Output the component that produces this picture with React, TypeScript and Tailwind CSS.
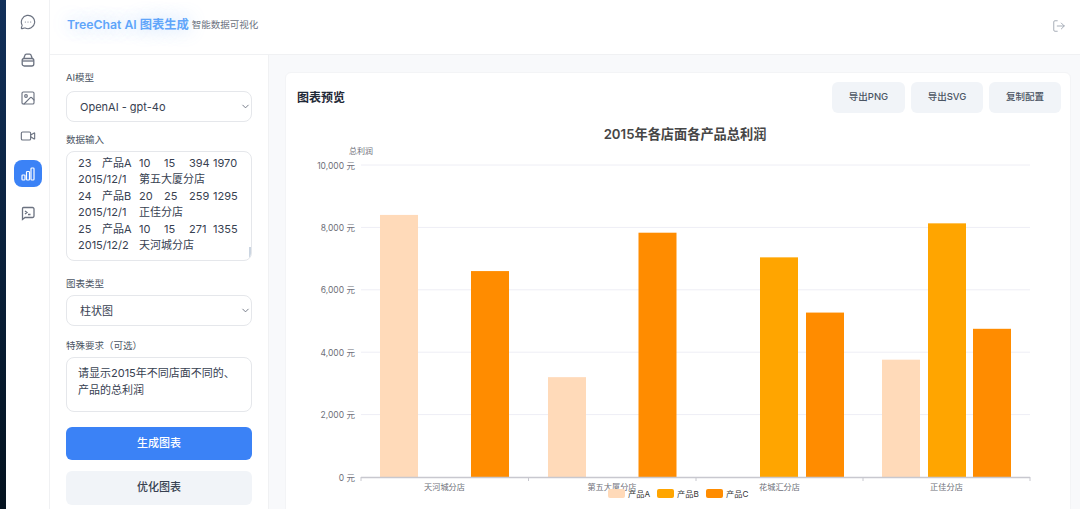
import { ChevronDown, Image, LogOut, MessageCircleMore, Video } from "lucide-react";

const font = { cjk: "font-['Inter','Noto_Sans_CJK_SC',sans-serif]" };

const rows = [
  ["23", "产品A", "10", "15", "394", "1970"],
  ["2015/12/1", "第五大厦分店"],
  ["24", "产品B", "20", "25", "259", "1295"],
  ["2015/12/1", "正佳分店"],
  ["25", "产品A", "10", "15", "271", "1355"],
  ["2015/12/2", "天河城分店"],
];

const colors = { a: "#ffdab9", b: "#ffa500", c: "#ff8c00" };

const bars = [
  { x: 380, value: 8400, fill: colors.a },
  { x: 471, value: 6600, fill: colors.c },
  { x: 548, value: 3200, fill: colors.a },
  { x: 638.5, value: 7830, fill: colors.c },
  { x: 760, value: 7040, fill: colors.b },
  { x: 806, value: 5270, fill: colors.c },
  { x: 882, value: 3760, fill: colors.a },
  { x: 928, value: 8130, fill: colors.b },
  { x: 973, value: 4750, fill: colors.c },
];

function PackIcon() {
  return (
    <svg width="16" height="16" viewBox="0 0 16 16" fill="none" stroke="currentColor" strokeWidth="1.3">
      <rect x="2.2" y="6.500" width="11.6" height="7.500" rx="2" />
      <path d="M3.800 6.500 4.800 3.500C5 2.700 5.600 2.200 6.400 2.200h3.200c.8 0 1.400.5 1.600 1.300l1 3" />
      <path d="M2.500 9h11" />
    </svg>
  );
}

function BarsIcon() {
  return (
    <svg width="16" height="16" viewBox="0 0 16 16" fill="none" stroke="currentColor" strokeWidth="1.2">
      <rect x="2" y="9" width="3" height="5" rx="0.8" />
      <rect x="6.500" y="5.500" width="3" height="8.500" rx="0.8" />
      <rect x="11" y="2" width="3" height="12" rx="0.8" />
    </svg>
  );
}

function TerminalIcon() {
  return (
    <svg width="16" height="16" viewBox="0 0 16 16" fill="none" stroke="currentColor" strokeWidth="1.3">
      <path d="M3.500 2.500h9a1.500 1.500 0 0 1 1.500 1.500v7a1.500 1.500 0 0 1-1.500 1.500H5L2.500 14.500V3.500a1 1 0 0 1 1-1Z" />
      <path d="m5 6 2 1.500L5 9M8 9.500h2.500" />
    </svg>
  );
}

function Field({ label, gap, children }: { label: string; gap: string; children: React.ReactNode }) {
  return (
    <div>
      <div className={`text-[9.500px] leading-[14px] pt-[1px] text-[#4b5563] ${gap}`}>{label}</div>
      {children}
    </div>
  );
}

function SelectBox({ text }: { text: string }) {
  return (
    <div className="relative">
      <select
        defaultValue={text}
        className={`${font.cjk} w-full h-[31px] appearance-none rounded-lg border border-[#e5e7eb] bg-white pl-[13px] pt-[1px] text-[11px] text-[#374151]`}
      >
        <option>{text}</option>
      </select>
      <ChevronDown className="absolute right-[1px] top-[10px] w-[11px] h-[11px] text-[#6b7280]" />
    </div>
  );
}

function ExportButton({ text, width }: { text: string; width: string }) {
  return (
    <button className={`${width} h-[31px] rounded-md bg-[#f1f4f8] text-[9.500px] font-medium text-[#4b5563]`}>
      {text}
    </button>
  );
}

function Chart() {
  const y = (v: number) => 477 - (v / 10000) * 312;
  return (
    <svg width="785" height="437" viewBox="286 73 785 437" className="absolute left-0 top-0">
      <g fontFamily="Inter, 'Noto Sans CJK SC', sans-serif">
        <text x="685" y="138.500" textAnchor="middle" fontSize="13.200" fontWeight="600" fill="#464646">
          2015年各店面各产品总利润
        </text>
        <text x="361" y="154" textAnchor="middle" fontSize="8" fill="#6e7079">总利润</text>
        {[0, 2000, 4000, 6000, 8000, 10000].map((v) => (
          <g key={v}>
            {v > 0 && <line x1="361" x2="1030" y1={y(v)} y2={y(v)} stroke="#eeeef5" />}
            <text x="355" y={y(v) + 3.500} textAnchor="end" fontSize="8.500" fill="#6e7079">
              {v.toLocaleString("en-US")} 元
            </text>
          </g>
        ))}
        {bars.map((b) => (
          <rect key={b.x} x={b.x} y={y(b.value)} width="38" height={477 - y(b.value)} fill={b.fill} />
        ))}
        <line x1="361" x2="1030" y1="477.500" y2="477.500" stroke="#c8c8cf" strokeWidth="1.500" />
        {[361, 528.500, 696, 863, 1030].map((x) => (
          <line key={x} x1={x} x2={x} y1="477" y2="481" stroke="#c8c8cf" />
        ))}
        {[
          ["天河城分店", 444.500],
          ["第五大厦分店", 612],
          ["花城汇分店", 779.500],
          ["正佳分店", 946.500],
        ].map(([t, x]) => (
          <text key={t} x={x} y="490" textAnchor="middle" fontSize="8.200" fill="#6e7079">{t}</text>
        ))}
        {[
          ["产品A", 608, colors.a],
          ["产品B", 657, colors.b],
          ["产品C", 706, colors.c],
        ].map(([t, x, c]) => (
          <g key={t as string}>
            <rect x={x as number} y="489" width="17" height="9" rx="2" fill={c as string} />
            <text x={(x as number) + 20} y="497" fontSize="8.200" fill="#333">{t}</text>
          </g>
        ))}
      </g>
    </svg>
  );
}

export default function App() {
  return (
    <div className={`${font.cjk} flex w-[1080px] h-[509px] overflow-hidden bg-white`}>
      <div className="w-[6px] shrink-0 bg-gradient-to-b from-[#12305a] to-[#04121f]" />
      <aside className="w-[44px] shrink-0 border-r border-[#f0f1f3] flex flex-col items-center pt-[8px] gap-[11px] text-[#6b7280] bg-white">
        {[
          <MessageCircleMore key="chat" className="w-[16px] h-[16px]" strokeWidth={1.7} />,
          <PackIcon key="pack" />,
          <Image key="image" className="w-[16px] h-[16px]" strokeWidth={1.7} />,
          <Video key="video" className="w-[16px] h-[16px]" strokeWidth={1.7} />,
        ].map((icon, i) => (
          <div key={i} className="w-[28px] h-[27px] flex items-center justify-center">{icon}</div>
        ))}
        <div className="w-[28px] h-[27px] rounded-lg bg-[#3b82f6] text-white flex items-center justify-center">
          <BarsIcon />
        </div>
        <div className="w-[28px] h-[27px] mt-[1px] flex items-center justify-center"><TerminalIcon /></div>
      </aside>
      <div className="flex-1 flex flex-col min-w-0">
        <header className="h-[55px] shrink-0 border-b border-[#f0f1f3] flex items-center pl-[17px] pr-[14px] pb-[3px] bg-white">
          <span className="text-[12.250px] font-semibold text-[#60a5fa] [text-shadow:0_0_18px_rgba(96,165,250,0.45)]">
            TreeChat AI 图表生成
          </span>
          <span className="ml-[3px] text-[9.500px] text-[#6b7280]">智能数据可视化</span>
          <LogOut className="ml-auto w-[14px] h-[14px] text-[#9ca3af]" strokeWidth={1.5} />
        </header>
        <div className="flex-1 flex min-h-0">
          <div className="w-[219px] shrink-0 border-r border-[#f0f1f3] px-[16px] pt-[15px] flex flex-col bg-white">
            <Field label="AI模型" gap="mb-[6px]"><SelectBox text="OpenAI - gpt-4o" /></Field>
            <div className="mt-[10px]">
              <Field label="数据输入" gap="mb-[4px]">
                <div className="relative h-[110px] rounded-lg border border-[#e5e7eb] overflow-hidden px-[11px] pt-[3px] text-[11px] leading-[16.400px] text-[#374151]">
                  {rows.map((row, i) => (
                    <div key={i} className="flex whitespace-nowrap">
                      {row.length === 2 ? (
                        <>
                          <span className="w-[61px]">{row[0]}</span>
                          <span>{row[1]}</span>
                        </>
                      ) : (
                        <>
                          <span className="w-[24px]">{row[0]}</span>
                          <span className="w-[37px]">{row[1]}</span>
                          <span className="w-[25px]">{row[2]}</span>
                          <span className="w-[25px]">{row[3]}</span>
                          <span className="w-[24px]">{row[4]}</span>
                          <span>{row[5]}</span>
                        </>
                      )}
                    </div>
                  ))}
                  <div className="absolute right-0 bottom-0 w-[2.500px] h-[13px] bg-[#cbd5e1]" />
                </div>
              </Field>
            </div>
            <div className="mt-[15px]">
              <Field label="图表类型" gap="mb-[4px]"><SelectBox text="柱状图" /></Field>
            </div>
            <div className="mt-[12px]">
              <Field label="特殊要求（可选）" gap="mb-[4px]">
                <div className="h-[55px] rounded-lg border border-[#e5e7eb] px-[11px] pt-[7px] text-[11px] leading-[16.800px] text-[#374151]">
                  请显示2015年不同店面不同的、
                  <br />
                  产品的总利润
                </div>
              </Field>
            </div>
            <div className="flex flex-col gap-[11px] mt-[14.500px]">
              <button className="h-[33px] rounded-md bg-[#3b82f6] text-white text-[11px] font-medium">生成图表</button>
              <button className="h-[34px] rounded-md bg-[#f1f4f8] text-[#374151] text-[11px] font-medium">优化图表</button>
            </div>
          </div>
          <main className="flex-1 bg-[#f8f9fb] pl-[16px] pr-[9px] pt-[17px] min-w-0">
            <div className="relative h-[460px] rounded-md bg-white border border-[#f3f4f6]">
              <Chart />
              <div className="relative flex items-center pl-[11px] pr-[9px] pt-[9px]">
                <h2 className="text-[12px] font-semibold text-[#1f2937]">图表预览</h2>
                <div className="ml-auto flex gap-[6px]">
                  <ExportButton text="导出PNG" width="w-[73px]" />
                  <ExportButton text="导出SVG" width="w-[72px]" />
                  <ExportButton text="复制配置" width="w-[72px]" />
                </div>
              </div>
            </div>
          </main>
        </div>
      </div>
    </div>
  );
}
